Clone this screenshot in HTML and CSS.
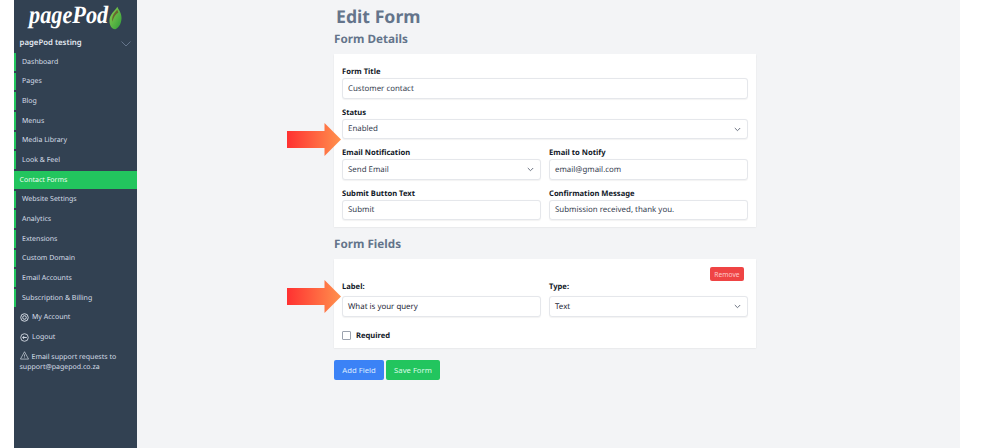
FILE: index.html
```html
<!DOCTYPE html>
<html lang="en">
<head>
<meta charset="utf-8">
<title>Edit Form</title>
<link rel="stylesheet" href="styles.css">
</head>
<body>
<div class="frame">
  <aside class="sidebar">
    <div class="logo">
      <span class="logo-text">pagePod</span>
      <svg class="leaf" viewBox="0 0 14 24" width="13" height="24"><defs><linearGradient id="lg" x1="0" y1="0" x2="1" y2="1"><stop offset="0" stop-color="#8fd14f"/><stop offset="1" stop-color="#2e9b3a"/></linearGradient></defs><path d="M9 0C10 3 13.500 6 13.500 12C13.500 19 9 24 6.500 24C3 24 .5 20 .5 15C.5 8 6 5 9 0Z" fill="url(#lg)"/><path d="M9 3C5 7 3 10 3.500 16C5 11 7 8 10 6Z" fill="#6b4a2a" opacity=".75"/></svg>
    </div>
    <div class="site-row">
      <span>pagePod testing</span>
      <svg width="10" height="6" viewBox="0 0 10 6"><path d="M.5 .5L5 5L9.500 .5" fill="none" stroke="#64748b" stroke-width="1"/></svg>
    </div>
    <nav class="nav">
      <a class="nav-item">Dashboard</a>
      <a class="nav-item">Pages</a>
      <a class="nav-item">Blog</a>
      <a class="nav-item">Menus</a>
      <a class="nav-item">Media Library</a>
      <a class="nav-item">Look &amp; Feel</a>
      <a class="nav-item active">Contact Forms</a>
      <a class="nav-item">Website Settings</a>
      <a class="nav-item">Analytics</a>
      <a class="nav-item">Extensions</a>
      <a class="nav-item">Custom Domain</a>
      <a class="nav-item">Email Accounts</a>
      <a class="nav-item">Subscription &amp; Billing</a>
      <a class="nav-item plain"><svg class="ico" viewBox="0 0 10 10" width="9" height="9"><circle cx="5" cy="5" r="4.200" fill="none" stroke="#e2e8f0" stroke-width="1"/><circle cx="5" cy="5" r="2" fill="none" stroke="#e2e8f0" stroke-width="1"/></svg>My Account</a>
      <a class="nav-item plain"><svg class="ico" viewBox="0 0 10 10" width="9" height="9"><circle cx="5" cy="5" r="4.200" fill="none" stroke="#e2e8f0" stroke-width=".9"/><path d="M7.500 5H3M4.500 3.500L3 5L4.500 6.500" fill="none" stroke="#e2e8f0" stroke-width="1"/></svg>Logout</a>
    </nav>
    <p class="support"><svg class="ico" viewBox="0 0 10 10" width="9" height="9"><path d="M5 .8L9.500 9H.5Z M5 3.800V6.300M5 7.200V7.800" fill="none" stroke="#e2e8f0" stroke-width=".7"/></svg>Email support requests to<br>support@pagepod.co.za</p>
  </aside>

  <main class="main">
    <h1 class="title">Edit Form</h1>
    <h2 class="section">Form Details</h2>
    <section class="card details">
      <div class="field">
        <label class="label">Form Title</label>
        <div class="input">Customer contact</div>
      </div>
      <div class="field">
        <label class="label">Status</label>
        <div class="input select">Enabled<svg class="chev" width="7" height="5" viewBox="0 0 7 5"><path d="M.8 1L3.500 3.700L6.200 1" fill="none" stroke="#6b7280"/></svg></div>
      </div>
      <div class="grid">
        <div class="field">
          <label class="label">Email Notification</label>
          <div class="input select">Send Email<svg class="chev" width="7" height="5" viewBox="0 0 7 5"><path d="M.8 1L3.500 3.700L6.200 1" fill="none" stroke="#6b7280"/></svg></div>
        </div>
        <div class="field">
          <label class="label">Email to Notify</label>
          <div class="input">email@gmail.com</div>
        </div>
      </div>
      <div class="grid">
        <div class="field">
          <label class="label">Submit Button Text</label>
          <div class="input">Submit</div>
        </div>
        <div class="field">
          <label class="label">Confirmation Message</label>
          <div class="input">Submission received, thank you.</div>
        </div>
      </div>
    </section>

    <h2 class="section fields-head">Form Fields</h2>
    <section class="card fields">
      <div class="remove-row"><button class="btn remove">Remove</button></div>
      <div class="grid">
        <div class="field">
          <label class="label spaced">Label:</label>
          <div class="input dark">What is your query</div>
        </div>
        <div class="field">
          <label class="label spaced">Type:</label>
          <div class="input select dark">Text<svg class="chev" width="7" height="5" viewBox="0 0 7 5"><path d="M.8 1L3.500 3.700L6.200 1" fill="none" stroke="#6b7280"/></svg></div>
        </div>
      </div>
      <div class="check-row"><span class="check"></span><span class="label">Required</span></div>
    </section>

    <div class="actions">
      <button class="btn add">Add Field</button>
      <button class="btn save">Save Form</button>
    </div>
  </main>
  <svg class="arrow arrow-one" viewBox="0 0 54 33" width="54" height="33"><defs><linearGradient id="ag" x1="0" x2="1" y1="0" y2="0"><stop offset="0" stop-color="#ff3131"/><stop offset="1" stop-color="#ff914d"/></linearGradient></defs><path d="M0 8H37.500V0L54 16.500L37.500 33V25H0Z" fill="url(#ag)"/></svg>
  <svg class="arrow arrow-two" viewBox="0 0 54 33" width="54" height="33"><path d="M0 8H37.500V0L54 16.500L37.500 33V25H0Z" fill="url(#ag)"/></svg>
</div>
</body>
</html>
```

FILE: styles.css
```css
* { box-sizing: border-box; }
html, body { margin: 0; height: 100%; background: #fff; overflow: hidden; }
body { font-family: "Noto Sans", sans-serif; color: #1f2937; text-rendering: geometricPrecision; }

.frame {
  position: relative;
  display: flex;
  height: 448px;
  width: 1000px;
  padding-left: 14px;
  padding-right: 40px;
}

.sidebar {
  width: 123px;
  flex: none;
  background: #324152;
  color: #e2e8f0;
}
.logo {
  height: 33px;
  display: flex;
  align-items: flex-start;
  padding: 2px 0 0 15px;
  gap: 1px;
}
.logo-text {
  font-family: "Liberation Serif", serif;
  font-style: italic;
  font-weight: 700;
  font-size: 22.300px;
  line-height: 26px;
  color: #fff;
  transform: scaleY(1.12);
}
.leaf { margin-top: 4px; }
.site-row {
  height: 18px;
  display: flex;
  align-items: center;
  justify-content: space-between;
  padding: 1px 6px 0 5.500px;
  font-size: 7.800px;
  font-weight: 600;
}
.site-row svg { margin-top: 3px; }
.nav { display: flex; flex-direction: column; gap: 2px; margin-top: 2px; }
.nav-item {
  height: 17.670px;
  display: flex;
  align-items: center;
  padding: 1px 0 0 6px;
  border-left: 2px solid #22c55e;
  font-size: 7px;
  color: #d6dee8;
}
.nav-item.active {
  background: #22c55e;
  border-left: 0;
  padding-left: 5.500px;
  color: #f0fdf4;
}
.nav-item.plain { border-left: 0; padding-left: 6px; }
.ico { margin-right: 3px; flex: none; }
.support {
  margin: 5px 0 0;
  padding-left: 5.500px;
  font-size: 7px;
  line-height: 10px;
  color: #d6dee8;
}
.support .ico { vertical-align: -1px; }

.main {
  flex: 1;
  background: #f3f4f6;
  padding: 5px 204px 0 197px;
}
.title {
  margin: 0 0 0 2px;
  font-size: 17.700px;
  line-height: 24px;
  font-weight: 700;
  color: #64748b;
}
.section {
  margin: 2px 0 0;
  font-size: 11.700px;
  line-height: 17px;
  font-weight: 700;
  color: #64748b;
}
.card {
  background: #fff;
  padding: 0 8px;
  box-shadow: 0 .5px 1.500px rgba(0,0,0,.1);
}
.details { margin-top: 6px; height: 173px; padding-top: 12px; }
.section.fields-head { margin-top: 9px; }
.fields { margin-top: 6px; height: 89px; padding-top: 8px; }

.field { margin-bottom: 8px; min-width: 0; }
.label {
  display: block;
  font-size: 7.600px;
  line-height: 12px;
  font-weight: 700;
  color: #111827;
}
.label.spaced { margin-bottom: 3px; }
.input {
  height: 20.500px;
  display: flex;
  align-items: center;
  justify-content: space-between;
  padding: 1px 6px 0 5px;
  background: #fff;
  border: 1px solid #e5e7eb;
  border-radius: 3px;
  box-shadow: 0 .5px 1px rgba(0,0,0,.05);
  font-size: 7.900px;
  color: #374151;
}
.input.dark { color: #1f2937; }
.chev { flex: none; }
.grid {
  display: grid;
  grid-template-columns: 1fr 1fr;
  column-gap: 8px;
}

.remove-row { display: flex; justify-content: flex-end; padding-right: 4px; height: 14px; }
.btn {
  border: 0;
  font-family: inherit;
  color: #dbeafe;
  border-radius: 2px;
  padding: 0;
}
.remove { width: 34px; height: 14px; background: #ef4444; color: #fecaca; font-size: 6.700px; }
.check-row { display: flex; align-items: center; gap: 5px; margin-top: 5px; }
.check {
  width: 9px;
  height: 9px;
  background: #fff;
  border: 1px solid #9ca3af;
  border-radius: 1px;
}
.actions { display: flex; gap: 2px; margin-top: 12px; }
.add, .save { height: 20px; font-size: 7.700px; }
.add { width: 50px; background: #3b82f6; }
.save { width: 54px; background: #22c55e; color: #dcfce7; }

.arrow { position: absolute; left: 287px; }
.arrow-one { top: 122.500px; }
.arrow-two { top: 279.500px; }
```
